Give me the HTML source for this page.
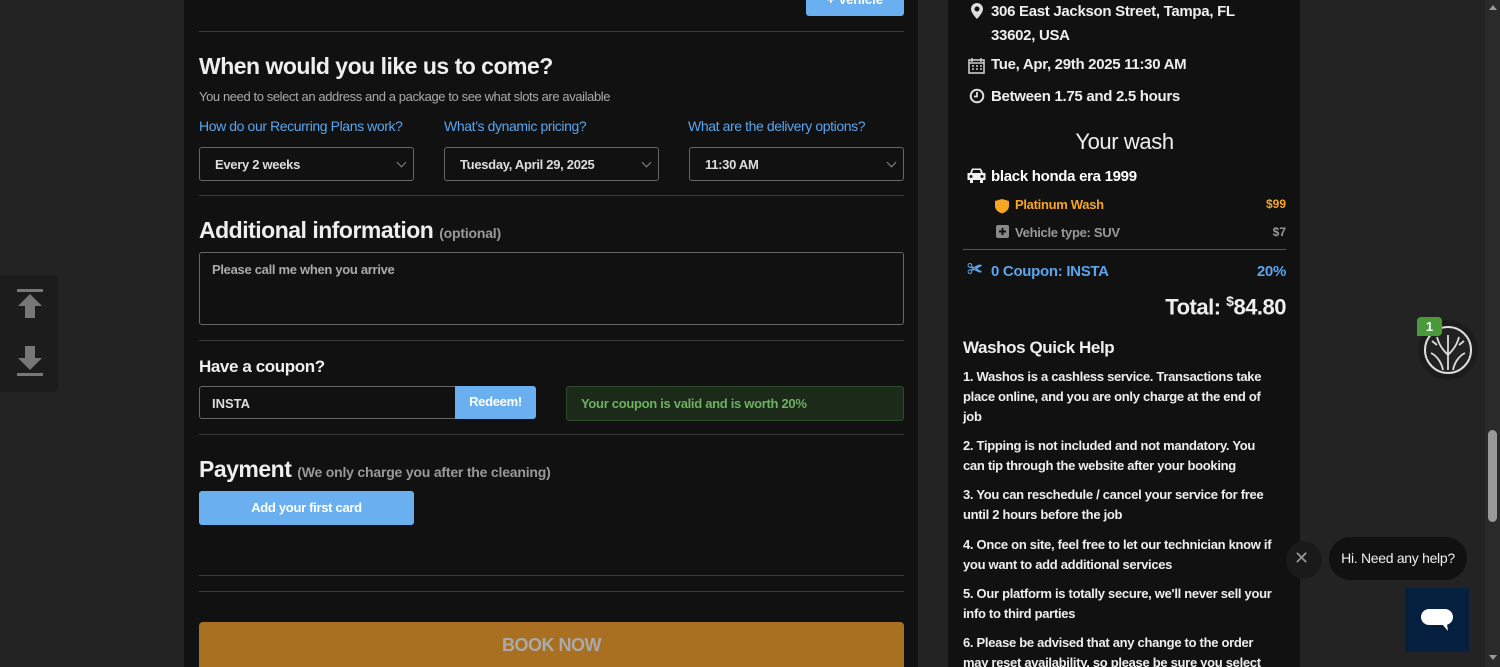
<!DOCTYPE html>
<html style="overflow:hidden"><head><meta charset="utf-8"><style>
*{margin:0;padding:0;box-sizing:border-box}
html,body{width:1500px;height:667px;overflow:hidden}
body{background:#232323;font-family:"Liberation Sans",sans-serif;color:#eee;position:relative}
.a{position:absolute;white-space:nowrap}
.main{position:absolute;left:184px;top:0;width:734px;height:667px;background:#111}
.side{position:absolute;left:948px;top:0;width:352px;height:667px;background:#111}
.hr{position:absolute;height:1px;background:#3a3a3a}
.sel{position:absolute;height:34px;border:1px solid #666;border-radius:3px;font-size:13px;font-weight:bold;color:#ddd;padding:9px 15px;letter-spacing:-.3px}
.sel:after{content:"";position:absolute;right:8px;top:11px;width:6px;height:6px;border-right:1.5px solid #888;border-bottom:1.5px solid #888;transform:rotate(45deg)}
.lnk{color:#5aa5ee;font-size:14px;letter-spacing:-.4px}
.h2{font-size:23px;font-weight:bold;letter-spacing:-.5px;color:#eee}
.s{font-size:14px;font-weight:bold;letter-spacing:-.3px}
.qh{font-size:13px;font-weight:bold;letter-spacing:-.3px;line-height:20px;color:#eee;width:312px;white-space:normal}
</style></head><body>
<div class="main"></div>
<div class="side"></div>
<div class="a" style="left:0;top:275px;width:58px;height:117px;background:#1c1c1c;border-radius:0 4px 4px 0"></div>
<svg class="a" style="left:16px;top:288px" width="28" height="92" viewBox="0 0 28 92"><rect x="1" y="1" width="26" height="3" fill="#777"/><path d="M14 6 L26 18 H19 V30 H9 V18 H2Z" fill="#777"/><path d="M9 58 H19 V70 H26 L14 82 L2 70 H9Z" fill="#777"/><rect x="1" y="85" width="26" height="3" fill="#777"/></svg>

<div class="a" style="left:806px;top:-4px;width:98px;height:20px;background:#6ab0f0;border-radius:3px;font-size:13px;font-weight:bold;text-align:center;line-height:8px;color:#fff">+ Vehicle</div>
<div class="hr" style="left:199px;top:31px;width:705px"></div>
<div class="a h2" style="left:199px;top:53px">When would you like us to come?</div>
<div class="a" style="left:199px;top:89px;font-size:13px;color:#aaa;letter-spacing:-.4px">You need to select an address and a package to see what slots are available</div>
<div class="a lnk" style="left:199px;top:118px">How do our Recurring Plans work?</div>
<div class="a lnk" style="left:444px;top:118px">What’s dynamic pricing?</div>
<div class="a lnk" style="left:688px;top:118px">What are the delivery options?</div>
<div class="sel" style="left:199px;top:147px;width:215px">Every 2 weeks</div>
<div class="sel" style="left:444px;top:147px;width:215px">Tuesday, April 29, 2025</div>
<div class="sel" style="left:689px;top:147px;width:215px">11:30 AM</div>
<div class="hr" style="left:199px;top:195px;width:705px"></div>
<div class="a h2" style="left:199px;top:217px">Additional information <span style="font-size:14px;color:#999;letter-spacing:-.2px">(optional)</span></div>
<div class="a" style="left:199px;top:252px;width:705px;height:73px;border:1px solid #666;border-radius:3px;padding:9px 12px;font-size:13px;color:#aaa;font-weight:bold;letter-spacing:-.3px">Please call me when you arrive</div>
<div class="hr" style="left:199px;top:340px;width:705px"></div>
<div class="a" style="left:199px;top:357px;font-size:17px;font-weight:bold;letter-spacing:-.4px">Have a coupon?</div>
<div class="a" style="left:199px;top:386px;width:257px;height:33px;border:1px solid #666;border-radius:3px 0 0 3px;padding:9px 12px;font-size:13px;font-weight:bold;color:#ddd">INSTA</div>
<div class="a" style="left:455px;top:386px;width:81px;height:33px;background:#6ab0f0;border-radius:0 3px 3px 0;font-size:13px;font-weight:bold;text-align:center;line-height:32px;color:#fff;letter-spacing:-.3px">Redeem!</div>
<div class="a" style="left:566px;top:386px;width:338px;height:35px;background:#1c2a1a;border:1px solid #2f4a2c;border-radius:3px;padding:9px 14px;font-size:13px;font-weight:bold;color:#6db060;letter-spacing:-.3px">Your coupon is valid and is worth 20%</div>
<div class="hr" style="left:199px;top:434px;width:705px"></div>
<div class="a h2" style="left:199px;top:456px">Payment <span style="font-size:14px;color:#999;letter-spacing:-.2px">(We only charge you after the cleaning)</span></div>
<div class="a" style="left:199px;top:491px;width:215px;height:34px;background:#6ab0f0;border-radius:3px;font-size:13px;font-weight:bold;text-align:center;line-height:34px;color:#fff;letter-spacing:-.3px">Add your first card</div>
<div class="hr" style="left:199px;top:575px;width:705px"></div>
<div class="hr" style="left:199px;top:591px;width:705px"></div>
<div class="a" style="left:199px;top:622px;width:705px;height:45px;background:#a87020;border-radius:4px 4px 0 0;font-size:18px;font-weight:bold;text-align:center;line-height:46px;color:#aaa;letter-spacing:-.5px">BOOK NOW</div>

<svg class="a" style="left:971px;top:3px" width="12" height="16" viewBox="0 0 12 16"><path d="M6 0C2.7 0 0 2.6 0 6c0 4 6 10 6 10s6-6 6-10C12 2.6 9.3 0 6 0zm0 8.5A2.5 2.5 0 1 1 6 3.5a2.5 2.5 0 0 1 0 5z" fill="#ddd"/></svg>
<div class="a s" style="left:991px;top:0px;font-size:15px;line-height:24px">306 East Jackson Street, Tampa, FL<br>33602, USA</div>
<svg class="a" style="left:968px;top:57px" width="17" height="17" viewBox="0 0 17 17"><rect x="1" y="3" width="15" height="13" fill="none" stroke="#ccc" stroke-width="1.6"/><path d="M1 6H16M4 1v4M13 1v4M4 9h2M8 9h2M12 9h2M4 12h2M8 12h2M12 12h2" stroke="#ccc" stroke-width="1.5"/></svg>
<div class="a s" style="left:991px;top:56px;font-size:15px">Tue, Apr, 29th 2025 11:30 AM</div>
<svg class="a" style="left:969px;top:88px" width="16" height="16" viewBox="0 0 16 16"><circle cx="8" cy="8" r="6.3" fill="none" stroke="#ddd" stroke-width="2"/><path d="M8 4v4.5H5" fill="none" stroke="#ddd" stroke-width="1.8"/></svg>
<div class="a s" style="left:991px;top:88px;font-size:15px">Between 1.75 and 2.5 hours</div>
<div class="a" style="left:963px;top:129px;width:323px;text-align:center;font-size:22px;letter-spacing:-.4px;color:#eee">Your wash</div>
<svg class="a" style="left:966px;top:167px" width="21" height="17" viewBox="0 0 21 17"><path d="M4 6 L6 1.5 H15 L17 6 H19.5 V13 H17 V16 H14 V13 H7 V16 H4 V13 H1.5 V6Z" fill="#eee"/><path d="M6 6 L7.2 3 H13.8 L15 6Z" fill="#111"/><circle cx="5" cy="9.5" r="1.5" fill="#111"/><circle cx="16" cy="9.5" r="1.5" fill="#111"/></svg>
<div class="a s" style="left:991px;top:168px;font-size:15px;color:#fff">black honda era 1999</div>
<svg class="a" style="left:994px;top:198px" width="16" height="16" viewBox="0 0 16 16"><path d="M8 1 L15 3 V8 C15 12 11 14.5 8 15.5 C5 14.5 1 12 1 8 V3Z" fill="#f5a623"/></svg>
<div class="a" style="left:1015px;top:197px;font-size:13px;font-weight:bold;color:#f5a623;letter-spacing:-.3px">Platinum Wash</div>
<div class="a" style="left:1250px;top:197px;width:36px;text-align:right;font-size:12px;font-weight:bold;color:#f5a623">$99</div>
<svg class="a" style="left:996px;top:225px" width="13" height="13" viewBox="0 0 13 13"><rect width="13" height="13" rx="2" fill="#888"/><path d="M6.5 3v7M3 6.5h7" stroke="#111" stroke-width="2"/></svg>
<div class="a" style="left:1015px;top:225px;font-size:13px;color:#999;font-weight:bold;letter-spacing:-.3px">Vehicle type: SUV</div>
<div class="a" style="left:1250px;top:225px;width:36px;text-align:right;font-size:12px;font-weight:bold;color:#999">$7</div>
<div class="hr" style="left:963px;top:249px;width:323px;background:#555"></div>
<div class="a" style="left:967px;top:261px;font-size:16px;color:#5aa5ee">✀</div>
<div class="a s" style="left:991px;top:263px;font-size:15px;color:#5aa5ee">0 Coupon: INSTA</div>
<div class="a s" style="left:1230px;top:263px;width:56px;text-align:right;font-size:15px;color:#5aa5ee">20%</div>
<div class="a" style="left:1100px;top:293px;width:186px;text-align:right;font-size:22px;font-weight:bold;letter-spacing:-.5px">Total: <sup style="font-size:14px">$</sup>84.80</div>
<div class="a" style="left:963px;top:338px;font-size:17px;font-weight:bold;letter-spacing:-.4px">Washos Quick Help</div>
<div class="a qh" style="left:963px;top:367px">1. Washos is a cashless service. Transactions take place online, and you are only charge at the end of job</div>
<div class="a qh" style="left:963px;top:436px">2. Tipping is not included and not mandatory. You can tip through the website after your booking</div>
<div class="a qh" style="left:963px;top:485px">3. You can reschedule / cancel your service for free until 2 hours before the job</div>
<div class="a qh" style="left:963px;top:535px">4. Once on site, feel free to let our technician know if you want to add additional services</div>
<div class="a qh" style="left:963px;top:584px">5. Our platform is totally secure, we'll never sell your info to third parties</div>
<div class="a qh" style="left:963px;top:633px">6. Please be advised that any change to the order may reset availability, so please be sure you select</div>

<div class="a" style="left:1418px;top:320px;width:60px;height:60px;border-radius:50%;background:#1c1c1c"></div>
<svg class="a" style="left:1423px;top:325px" width="50" height="50" viewBox="0 0 50 50"><circle cx="25" cy="25" r="23" fill="#222" stroke="#ddd" stroke-width="2"/><path d="M25 45V30M25 30C20 25 16 20 14 12M25 30C30 25 34 20 36 12M20 45C18 35 12 30 8 28M30 45C32 35 38 30 42 28M25 30V10M14 20L9 16M36 20L41 16" stroke="#ddd" stroke-width="1.8" fill="none"/></svg>
<div class="a" style="left:1417px;top:317px;width:25px;height:19px;background:#4a9a3c;border-radius:4px 4px 4px 0;font-size:13px;font-weight:bold;text-align:center;line-height:19px;color:#fff">1</div>
<div class="a" style="left:1286px;top:541px;width:36px;height:38px;border-radius:50%;background:#1a1a1a"></div>
<div class="a" style="left:1294px;top:548px;font-size:18px;color:#999">✕</div>
<div class="a" style="left:1329px;top:537px;width:138px;height:43px;border-radius:22px;background:#111;font-size:14px;text-align:center;line-height:43px;color:#eee;letter-spacing:-.3px">Hi. Need any help?</div>
<div class="a" style="left:1405px;top:588px;width:64px;height:64px;background:#04203e"></div>
<svg class="a" style="left:1420px;top:608px" width="34" height="26" viewBox="0 0 34 26"><rect x="1" y="1" width="32" height="16" rx="8" fill="#fff"/><path d="M22 16 L28 23 L27 16Z" fill="#fff"/></svg>
<div class="a" style="left:1485px;top:0;width:15px;height:667px;background:#2a2a2a"></div>
<div class="a" style="left:1488px;top:430px;width:9px;height:92px;border-radius:5px;background:#999"></div>
<div class="a" style="left:1489px;top:5px;width:0;height:0;border-left:4px solid transparent;border-right:4px solid transparent;border-bottom:5px solid #999"></div>
<div class="a" style="left:1489px;top:655px;width:0;height:0;border-left:4px solid transparent;border-right:4px solid transparent;border-top:5px solid #999"></div>
</body></html>
